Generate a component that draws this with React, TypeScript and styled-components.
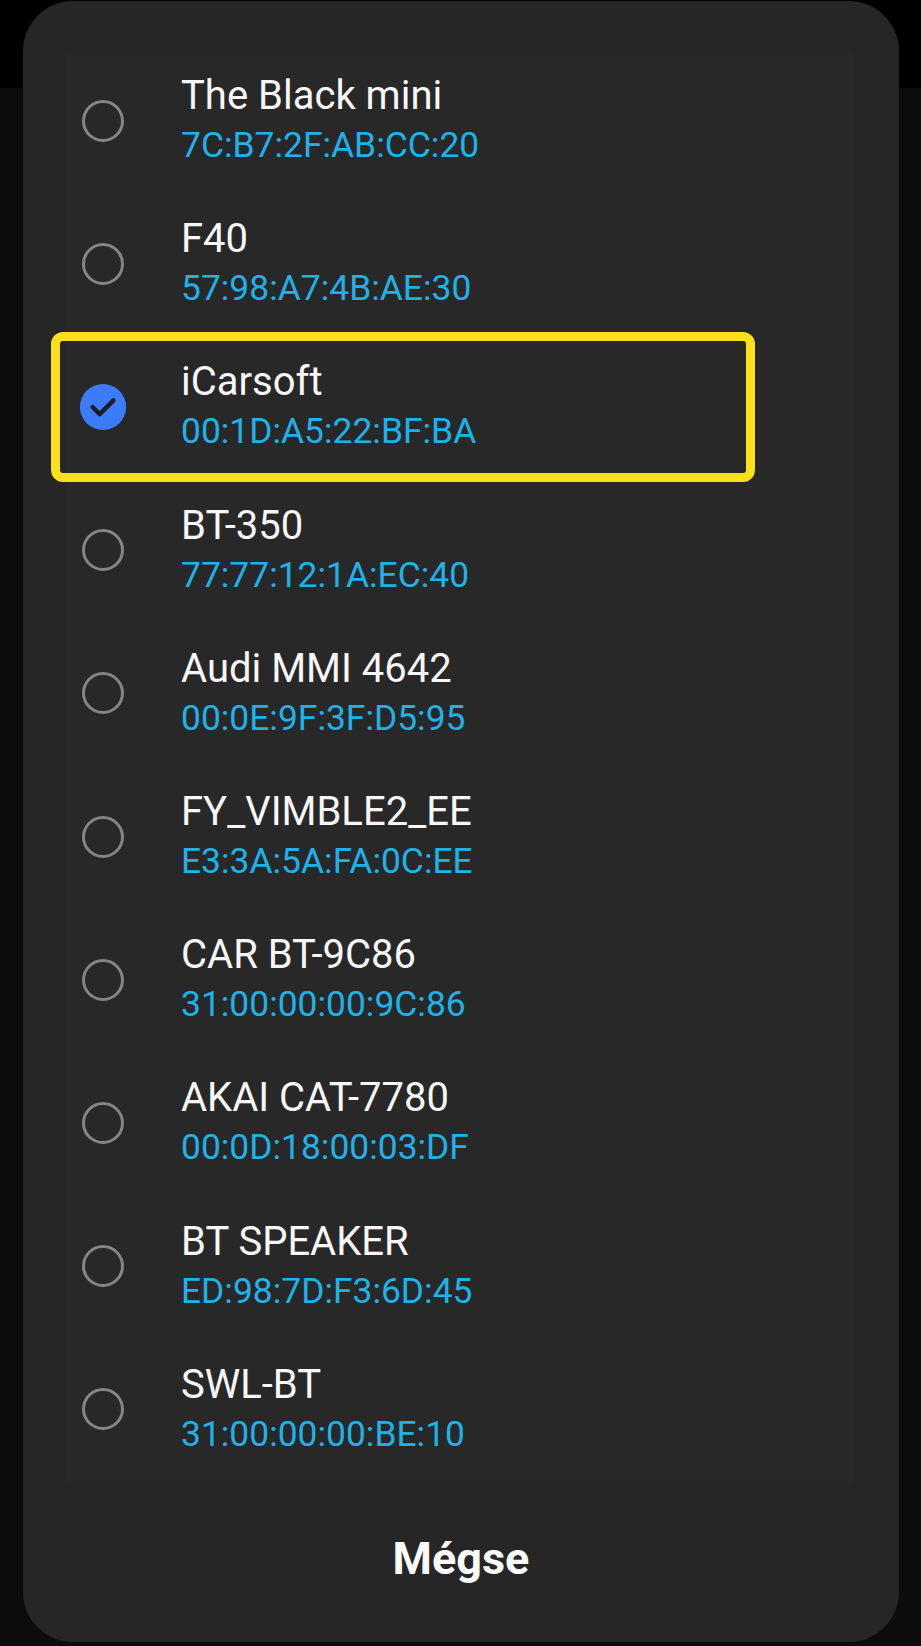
import React, { FC } from "react";
import styled, { createGlobalStyle } from "styled-components";

const GlobalStyle = createGlobalStyle`
  html, body {
    margin: 0;
    padding: 0;
    background: #0c0c0c;
  }
  body {
    font-family: Roboto, "Noto Sans", "Liberation Sans", sans-serif;
  }
`;

const colors = {
  dialog: "#262626",
  list: "#282828",
  name: "#f7f7f7",
  mac: "#1fb2e8",
  radio: "#858585",
  checked: "#3d7cf8",
  highlight: "#fde01b",
};

const devices = [
  { name: "The Black mini", mac: "7C:B7:2F:AB:CC:20" },
  { name: "F40", mac: "57:98:A7:4B:AE:30" },
  { name: "iCarsoft", mac: "00:1D:A5:22:BF:BA", selected: true },
  { name: "BT-350", mac: "77:77:12:1A:EC:40" },
  { name: "Audi MMI 4642", mac: "00:0E:9F:3F:D5:95" },
  { name: "FY_VIMBLE2_EE", mac: "E3:3A:5A:FA:0C:EE" },
  { name: "CAR BT-9C86", mac: "31:00:00:00:9C:86" },
  { name: "AKAI CAT-7780", mac: "00:0D:18:00:03:DF" },
  { name: "BT SPEAKER", mac: "ED:98:7D:F3:6D:45" },
  { name: "SWL-BT", mac: "31:00:00:00:BE:10" },
];

const Page = styled.div`
  width: 921px;
  height: 1646px;
  box-sizing: border-box;
  padding: 1px 22px 4px 23px;
  background: linear-gradient(#000 0, #000 88px, #0c0c0c 88px);
  display: flex;
`;

const Dialog = styled.div`
  flex: 1;
  background: ${colors.dialog};
  border-radius: 50px;
  display: flex;
  flex-direction: column;
`;

const List = styled.div`
  margin: 52px 46px 0 42px;
  background: ${colors.list};
  display: flex;
  flex-direction: column;
`;

const Row = styled.div`
  position: relative;
  height: 143.2px;
  box-sizing: border-box;
  padding: 0 0 8px 17px;
  display: flex;
  align-items: center;
  gap: 57px;
`;

const Highlight = styled.div`
  position: absolute;
  left: -14px;
  top: -7px;
  width: 704px;
  height: 150px;
  box-sizing: border-box;
  border: 9px solid ${colors.highlight};
  border-radius: 12px;
  pointer-events: none;
`;

const Radio = styled.div<{ $checked?: boolean }>`
  width: 42px;
  height: 42px;
  flex-shrink: 0;
  box-sizing: border-box;
  border-radius: 50%;
  border: ${(p) => (p.$checked ? "none" : `3px solid ${colors.radio}`)};
  background: ${(p) => (p.$checked ? colors.checked : "transparent")};
  display: flex;
  align-items: center;
  justify-content: center;
  transform: ${(p) => (p.$checked ? "scale(1.1)" : "none")};
`;

const Texts = styled.div`
  display: flex;
  flex-direction: column;
`;

const Name = styled.div`
  font-size: 40px;
  line-height: 46px;
  color: ${colors.name};
  font-weight: 400;
`;

const Mac = styled.div`
  margin-top: 4px;
  font-size: 35.4px;
  line-height: 45px;
  color: ${colors.mac};
`;

const Footer = styled.div`
  flex: 1;
  display: flex;
  align-items: center;
  justify-content: center;
  padding-bottom: 8px;
`;

const CancelButton = styled.button`
  background: none;
  border: none;
  padding: 0;
  font-family: Roboto, "Noto Sans", sans-serif;
  font-size: 45px;
  font-weight: 700;
  line-height: 50px;
  color: #fafafa;
  cursor: pointer;
`;

const Check: FC = () => (
  <svg width="32" height="32" viewBox="0 0 32 32" fill="none">
    <path
      d="M6.5 16 L13 22.5 L25.5 10"
      stroke="#1d1d28"
      strokeWidth="4"
      strokeLinecap="round"
      strokeLinejoin="round"
    />
  </svg>
);

const App: FC = () => {
  return (
    <>
      <GlobalStyle />
      <Page>
        <Dialog>
          <List>
            {devices.map((d) => (
              <Row key={d.mac}>
                {d.selected && <Highlight />}
                <Radio $checked={d.selected}>{d.selected && <Check />}</Radio>
                <Texts>
                  <Name>{d.name}</Name>
                  <Mac>{d.mac}</Mac>
                </Texts>
              </Row>
            ))}
          </List>
          <Footer>
            <CancelButton>Mégse</CancelButton>
          </Footer>
        </Dialog>
      </Page>
    </>
  );
};

export default App;
